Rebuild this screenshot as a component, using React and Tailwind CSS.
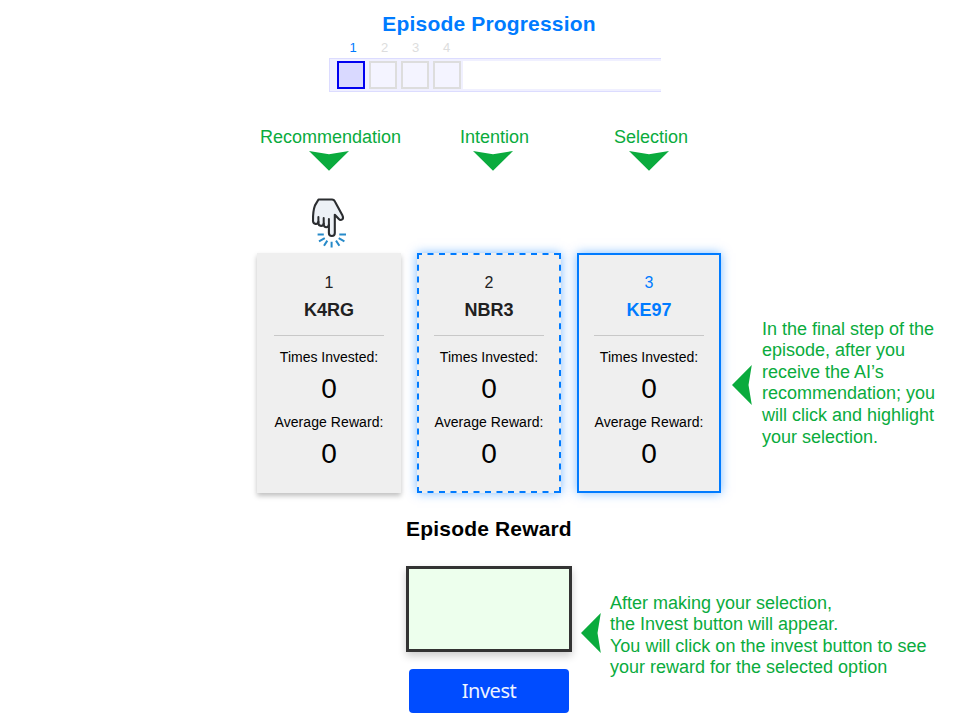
const cards = [
  { n: 1, name: 'K4RG', box: 'shadow-[0_3px_5px_rgba(0,0,0,0.25)]', text: 'text-[#212121]' },
  { n: 2, name: 'NBR3', box: 'shadow-[0_0_10px_rgba(0,123,255,0.5)]', text: 'text-[#212121]', dashed: true },
  { n: 3, name: 'KE97', box: 'border-2 border-[#007bff] shadow-[0_0_10px_rgba(0,123,255,0.5)]', text: 'text-[#007bff]' },
];

function DownArrow() {
  return (
    <svg className="block h-5 w-10" viewBox="0 0 40 20" fill="#0aab3d">
      <path d="M0 0 L20 3.3 L40 0 L20 19.8Z" />
    </svg>
  );
}

function LeftArrow() {
  return (
    <svg className="block h-10 w-5 shrink-0" viewBox="0 0 20 40" fill="#0aab3d">
      <path d="M19.8 0 L16.5 20 L19.8 40 L0 20Z" />
    </svg>
  );
}

function Hand() {
  return (
    <svg className="block h-[52px] w-9" viewBox="0 0 36 52" fill="none" strokeLinecap="round" strokeLinejoin="round">
      <path
        d="M8.5 1.5 H22 C23.8 1.5 24.6 2.5 25.3 4.2 L32.5 17.6 C34.2 21.2 31 23.4 28.6 20.8 L24.8 16.8 V35 C24.8 38.9 18.9 38.9 18.9 35 V26.7 C18.6 30 14 30 13.7 26.7 V25.6 C13.2 28.8 8.7 28.6 8.4 25.2 V23.8 C7.8 26.9 3.2 26.6 3 23 C2.9 17.4 3.3 11.8 5 7.4Z"
        fill="#edf1f6"
        stroke="#2b2d30"
        strokeWidth="2.1"
      />
      <path d="M8.4 24.6V19 M13.7 26V20 M18.9 27.5V21" stroke="#2b2d30" strokeWidth="2" />
      <path
        d="M7.6 36.6H13.8 M29.3 36.6H36 M9 43.4L14.8 40.2 M34.4 43.4L28.7 40.2 M14 47.8L17.3 42.6 M29.4 47.8L26 42.6 M21.6 43.7V49.6"
        stroke="#278ac9"
        strokeWidth="2"
        strokeLinecap="butt"
      />
    </svg>
  );
}

function Card({ card }) {
  return (
    <div className={`relative h-60 w-36 bg-[#efefef] ${card.box}`}>
      {card.dashed && (
        <svg className="absolute inset-0 h-60 w-36" fill="none" stroke="#007bff" strokeWidth="2">
          <path d="M0 1H144 M0 239H144" strokeDasharray="6 5.5" strokeDashoffset="1" />
          <path d="M1 0V240 M143 0V240" strokeDasharray="6 5.7" strokeDashoffset="0" />
        </svg>
      )}
      <div className={`flex flex-col items-center ${card.n === 3 ? 'pt-[18px]' : 'pt-5'}`}>
        <div className={`h-5 text-base leading-5 ${card.text}`}>{card.n}</div>
        <div className={`mt-[6px] text-lg leading-[22px] font-bold ${card.text}`}>{card.name}</div>
        <div className="mt-[14px] h-px w-[110px] bg-[#c8c8c8]" />
        <div className="mt-[11px] text-sm leading-5 whitespace-nowrap">Times Invested:</div>
        <div className="mt-1 text-[28px] leading-9">0</div>
        <div className="mt-[5px] text-sm leading-5 tracking-[0.07px] whitespace-nowrap">Average Reward:</div>
        <div className="mt-1 text-[28px] leading-9">0</div>
      </div>
    </div>
  );
}

export default function App() {
  return (
    <div className="h-[723px] w-[974px] overflow-hidden bg-white font-['Liberation_Sans',Arial,sans-serif] text-black">
      <header className="ml-[329px] w-[332px] pt-3">
        <h1 className="-ml-3 text-center text-[21px] leading-6 font-bold tracking-[0.17px] text-[#007bff]">
          Episode Progression
        </h1>
        <div className="flex h-[22px] pt-[5px] pl-2 text-[13px] leading-[14px] text-[#ddd]">
          <span className="w-8 text-center text-[#007bff]">1</span>
          <span className="w-[31px] text-center">2</span>
          <span className="w-[31px] text-center">3</span>
          <span className="w-[31px] text-center">4</span>
        </div>
        <div className="flex h-[34px] border-y border-l border-[#dcdcff] bg-[#f0f0ff] py-[2px] pl-[7px]">
          <div className="flex gap-1 pr-[2px]">
            <i className="size-7 border-2 border-[#0000f0] bg-[#d9d9ff]" />
            <i className="size-7 border-2 border-[#ddd] bg-[#f4f4ff]" />
            <i className="size-7 border-2 border-[#ddd] bg-[#f4f4ff]" />
            <i className="size-7 border-2 border-[#ddd] bg-[#f4f4ff]" />
          </div>
          <div className="flex-1 bg-white" />
        </div>
      </header>

      <div className="mt-[34px] ml-[257px] flex h-[72px] text-lg leading-[22px] text-[#0aab3d]">
        <div className="flex w-36 flex-col items-center gap-[3px]">
          <span className="mr-[-3px]">Recommendation</span>
          <DownArrow />
        </div>
        <div className="ml-5 flex w-36 flex-col items-center gap-[3px]">
          <span className="ml-[3px]">Intention</span>
          <DownArrow />
        </div>
        <div className="ml-3 flex w-36 flex-col items-center gap-[3px]">
          <span className="ml-1">Selection</span>
          <DownArrow />
        </div>
      </div>

      <div className="ml-[310px] h-[55px]">
        <Hand />
      </div>

      <div className="ml-[257px] flex">
        <div className="flex gap-4">
          {cards.map((c) => (
            <Card key={c.n} card={c} />
          ))}
        </div>
        <div className="ml-[11px] flex pt-[65px] text-lg leading-[21.6px] text-[#0aab3d]">
          <div className="pt-[47px]">
            <LeftArrow />
          </div>
          <p className="ml-[10px] pt-[0.6px] whitespace-nowrap">
            In the final step of the<br />episode, after you<br />receive the AI’s<br />recommendation; you<br />will click and highlight<br />your selection.
          </p>
        </div>
      </div>

      <div className="ml-[406px] flex">
        <section className="w-[166px] pt-6">
          <h2 className="text-center text-[21px] leading-6 font-bold tracking-[0.17px] whitespace-nowrap">Episode Reward</h2>
          <div className="mt-[25px] h-[86px] border-3 border-[#333] bg-[#edffed] shadow-[0_4px_8px_rgba(0,0,0,0.2)]" />
          <button className="mx-[3px] mt-[17px] block h-11 w-40 rounded-[4px] bg-[#004cff] pb-px font-['Noto_Sans',sans-serif] text-xl tracking-[-0.5px] text-[#eef3ff]">
            Invest
          </button>
        </section>
        <div className="ml-[9px] flex pt-[99px] text-lg leading-[21.6px] text-[#0aab3d]">
          <div className="pt-[21px]">
            <LeftArrow />
          </div>
          <p className="ml-[9px] pt-[0.6px] whitespace-nowrap">
            After making your selection,<br />the Invest button will appear.<br />You will click on the invest button to see<br />your reward for the selected option
          </p>
        </div>
      </div>
    </div>
  );
}
